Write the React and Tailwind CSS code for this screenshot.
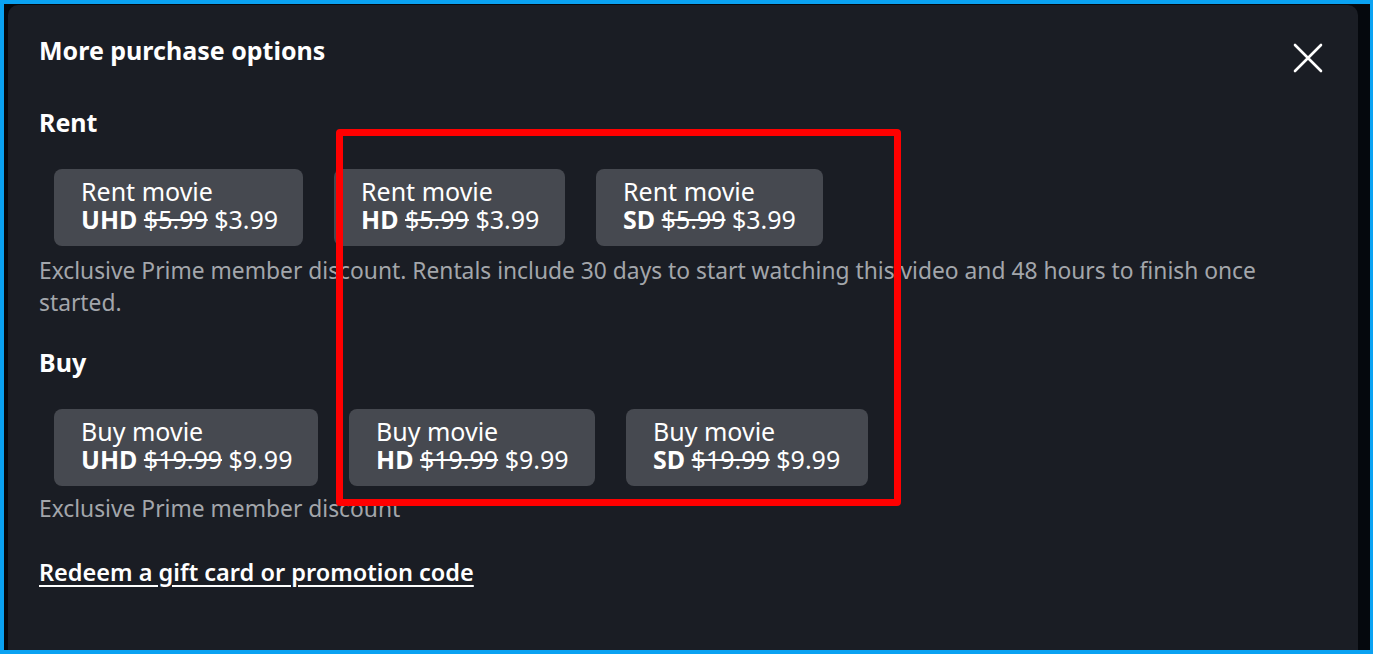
import React from 'react';

const rentOptions = [
  { quality: 'UHD', was: '$5.99', now: '$3.99', width: 'w-[249px]' },
  { quality: 'HD', was: '$5.99', now: '$3.99', width: 'w-[231px]' },
  { quality: 'SD', was: '$5.99', now: '$3.99', width: 'w-[227px]' },
];

const buyOptions = [
  { quality: 'UHD', was: '$19.99', now: '$9.99', width: 'w-[264px]' },
  { quality: 'HD', was: '$19.99', now: '$9.99', width: 'w-[246px]' },
  { quality: 'SD', was: '$19.99', now: '$9.99', width: 'w-[242px]' },
];

const OptionButton = ({ label, option }) => (
  <button
    className={`${option.width} h-[77px] rounded-lg bg-[#464950] pl-[27px] pb-[5px] text-left text-white text-[25px] leading-[28px] whitespace-nowrap`}
  >
    <div>{label}</div>
    <div>
      <span className="font-bold">{option.quality}</span>{' '}
      <span className="line-through">{option.was}</span> {option.now}
    </div>
  </button>
);

const CloseIcon = () => (
  <svg width="30" height="30" viewBox="0 0 30 30" fill="none" stroke="white" strokeWidth="2.6" strokeLinecap="round">
    <path d="M2 2 L28 28 M28 2 L2 28" />
  </svg>
);

export default function App() {
  return (
    <div
      className="w-[1373px] h-[654px] overflow-hidden border-l-4 border-t-4 border-r-[3px] border-b-4 border-[#0aa2f2] bg-[#05080d]"
      style={{ fontFamily: '"Noto Sans", "Open Sans", sans-serif' }}
    >
      <div className="relative ml-[4px] mt-[1px] w-[1350px] h-[660px] rounded-t-[10px] bg-[#1a1d24] pl-[31px] pr-[39px] pt-[29px]">
        <div className="flex items-start justify-between">
          <h1 className="text-[25px] font-bold text-white leading-[32px]">More purchase options</h1>
          <button className="mt-[9px] mr-[-4px]">
            <CloseIcon />
          </button>
        </div>

        <h2 className="mt-[33px] text-[25px] font-bold text-white leading-[32px]">Rent</h2>
        <div className="mt-[31px] ml-[15px] flex gap-[31px]">
          {rentOptions.map((o) => (
            <OptionButton key={o.quality} label="Rent movie" option={o} />
          ))}
        </div>
        <p className="mt-[9px] text-[22.8px] leading-[32px] text-[#a3a6ab]">
          Exclusive Prime member discount. Rentals include 30 days to start watching this video and 48 hours to finish once started.
        </p>

        <h2 className="mt-[27px] text-[25px] font-bold text-white leading-[32px]">Buy</h2>
        <div className="mt-[31px] ml-[15px] flex gap-[31px]">
          {buyOptions.map((o) => (
            <OptionButton key={o.quality} label="Buy movie" option={o} />
          ))}
        </div>
        <p className="mt-[7px] text-[22.8px] leading-[32px] text-[#a3a6ab]">Exclusive Prime member discount</p>

        <a href="#" className="mt-[31px] block w-fit text-[23.5px] font-semibold leading-[32px] text-white underline underline-offset-4">
          Redeem a gift card or promotion code
        </a>

        {/* highlight box drawn over the HD / SD options */}
        <div className="pointer-events-none absolute left-[328px] top-[124px] w-[565px] h-[377px] rounded-[4px] border-[7px] border-[#ff0000]" />
      </div>
    </div>
  );
}
